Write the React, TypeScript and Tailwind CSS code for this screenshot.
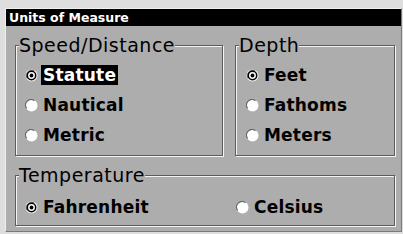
import React from 'react';

type Item = { label: string; checked?: boolean; focused?: boolean };

const Radio: React.FC<{ checked?: boolean }> = ({ checked }) => (
  <svg width="13" height="13" viewBox="0 0 13 13" className="shrink-0">
    {checked ? (
      <>
        <circle cx="6.5" cy="6.5" r="6" fill="#f2f2f2" />
        <path d="M1.9 9.2 A5.4 5.4 0 0 1 9.2 1.9" stroke="#6a6a6a" strokeWidth="1" fill="none" />
        <circle cx="6.5" cy="6.5" r="4.2" fill="#fff" stroke="#000" strokeWidth="1.5" />
        <circle cx="6.5" cy="6.5" r="1.9" fill="#000" />
      </>
    ) : (
      <>
        <circle cx="6.5" cy="6.5" r="6" fill="#fff" />
        <path d="M1.7 9.4 A5.5 5.5 0 0 1 9.4 1.7" stroke="#666" strokeWidth="1.1" fill="none" />
      </>
    )}
  </svg>
);

const Option: React.FC<Item> = ({ label, checked, focused }) => (
  <div className="flex items-center h-[30px] gap-[3px]">
    <Radio checked={checked} />
    <span
      className={`px-[2px] text-[17px] leading-[20px] font-bold tracking-[0.2px] ${
        focused ? 'bg-black text-white' : 'text-black'
      }`}
    >
      {label}
    </span>
  </div>
);

const Group: React.FC<{ title: string; className: string; children: React.ReactNode }> = ({
  title,
  className,
  children,
}) => (
  <fieldset
    className={`border border-[#5c5c5c] shadow-[inset_1px_1px_0_#f4f4f4,1px_1px_0_#f4f4f4] ${className}`}
  >
    <legend className="ml-[3px] bg-[#adadad] text-[19px] leading-[18px] text-black tracking-[0.5px]">
      {title}
    </legend>
    {children}
  </fieldset>
);

export default function App() {
  const speed: Item[] = [
    { label: 'Statute', checked: true, focused: true },
    { label: 'Nautical' },
    { label: 'Metric' },
  ];
  const depth: Item[] = [{ label: 'Feet', checked: true }, { label: 'Fathoms' }, { label: 'Meters' }];

  return (
    <div className="w-[403px] h-[234px] bg-[#dedede] pt-[8px] pl-[5px] pr-[1px] pb-[2px] font-['DejaVu_Sans',sans-serif]">
      <div className="h-full flex flex-col bg-[#adadad] border border-[#7a7a7a] border-t-[#efefef] border-l-[#efefef]">
        {/* Title bar */}
        <div className="h-[17px] bg-black text-white text-[12.5px] font-bold leading-[17px] pl-[3px]">
          Units of Measure
        </div>

        <div className="flex flex-col gap-[10px] pl-[9px] pt-[10px]">
          <div className="flex gap-[12px]">
            <Group title="Speed/Distance" className="w-[208px] h-[120px]">
              <div className="flex flex-col pt-[6px] pl-[9px]">
                {speed.map(o => (
                  <Option key={o.label} {...o} />
                ))}
              </div>
            </Group>
            <Group title="Depth" className="w-[160px] h-[120px]">
              <div className="flex flex-col pt-[6px] pl-[10px]">
                {depth.map(o => (
                  <Option key={o.label} {...o} />
                ))}
              </div>
            </Group>
          </div>

          <Group title="Temperature" className="w-[380px] h-[60px]">
            <div className="flex pt-[8px] pl-[9px]">
              <div className="w-[211px]">
                <Option label="Fahrenheit" checked />
              </div>
              <Option label="Celsius" />
            </div>
          </Group>
        </div>
      </div>
    </div>
  );
}
